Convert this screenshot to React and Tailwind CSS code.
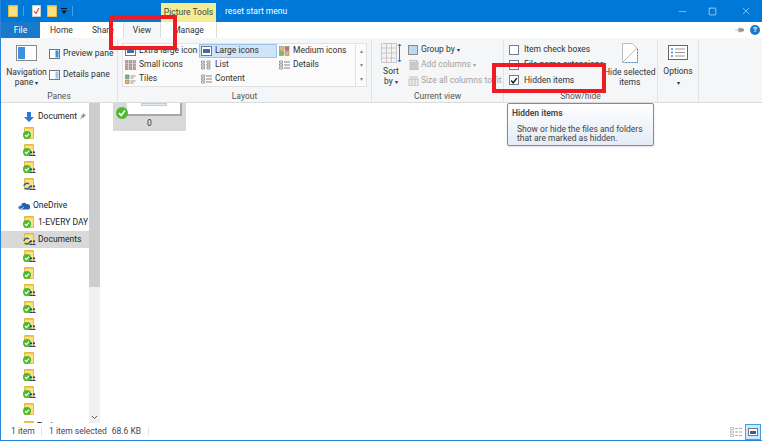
import { Minus, Square, X, ChevronDown } from 'lucide-react';

const FONT = { fontFamily: 'Roboto, "Noto Sans", sans-serif' };

function Folder({ className = 'w-[10px] h-[12px]' }) {
  return (
    <svg viewBox="0 0 10 12" className={className} preserveAspectRatio="none">
      <path d="M0.5 0.5h9v11h-9z" fill="#fde07f" stroke="#e6bb45" />
      <path d="M1 1.500h8" stroke="#f0c755" />
    </svg>
  );
}

function SyncFolder({ kind }) {
  return (
    <span className="relative block w-[12px] h-[13px] shrink-0">
      <span className="absolute right-[1px] top-0"><Folder /></span>
      {kind === 'sync' ? (
        <svg viewBox="0 0 8 8" className="absolute left-0 bottom-[1px] w-[8px] h-[8px]">
          <path d="M1 4a3 3 0 0 1 5-2M7 4a3 3 0 0 1-5 2" fill="none" stroke="#1f62b5" strokeWidth="1.5" />
        </svg>
      ) : (
        <svg viewBox="0 0 8 8" className="absolute left-0 bottom-[1px] w-[8px] h-[8px]">
          <circle cx="4" cy="4" r="4" fill="#4cb92f" />
          <path d="M2 4l1.500 1.600L6 2.600" fill="none" stroke="#fff" strokeWidth="1.200" />
        </svg>
      )}
      {kind !== 'check' && (
        <svg viewBox="0 0 7 5" className="absolute -right-[1px] bottom-[1px] w-[7px] h-[5px]">
          <circle cx="2" cy="1.300" r="1.100" fill="#1d3f86" />
          <circle cx="5" cy="1.300" r="1.100" fill="#1d3f86" />
          <path d="M0 5q2-3 4 0zM3 5q2-3 4 0z" fill="#1d3f86" />
        </svg>
      )}
    </span>
  );
}

function NavRow({ kind, label, selected, pin }) {
  return (
    <div className={`flex items-center h-[17px] pl-[22px] text-[8.5px] text-[#222] ${selected ? 'bg-[#d9d9d9]' : ''}`}>
      {kind === 'down' ? (
        <svg viewBox="0 0 12 12" className="w-[12px] h-[12px] shrink-0">
          <path d="M4 1h4v5h3L6 11 1 6h3z" fill="#2a7ad3" />
        </svg>
      ) : (
        <SyncFolder kind={kind} />
      )}
      {label && <span className="ml-[3px] whitespace-nowrap">{label}</span>}
      {pin && (
        <svg viewBox="0 0 8 8" className="w-[7px] h-[7px] ml-[2px]">
          <path d="M5 0l3 3-2 1-1 2-1-1-3 3 2-4-1-1 2-1z" fill="#999" />
        </svg>
      )}
    </div>
  );
}

function NavPane() {
  const lower = ['people', 'check', 'people', 'people', 'people', 'people', 'check', 'people', 'people', 'check'];
  return (
    <div className="w-[88px] shrink-0 overflow-hidden pt-[5px]">
      <NavRow kind="down" label="Document" pin />
      <NavRow kind="check" />
      <NavRow kind="people" />
      <NavRow kind="people" />
      <NavRow kind="sync" />
      <div className="h-[4px]" />
      <div className="flex items-center h-[17px] pl-[17px] text-[8.5px] text-[#222]">
        <svg viewBox="0 0 14 10" className="w-[12px] h-[10px] shrink-0">
          <path d="M3 9a2.500 2.500 0 0 1 0-5 4 4 0 0 1 7-1 3 3 0 0 1 2 6z" fill="#1f62b5" />
          <path d="M2 6a2 2 0 0 1 3-2M6 6a2 2 0 0 1-3 2" fill="none" stroke="#fff" strokeWidth="1" />
        </svg>
        <span className="ml-[3px]">OneDrive</span>
      </div>
      <NavRow kind="check" label="1-EVERY DAY" />
      <NavRow kind="sync" label="Documents" selected />
      {lower.map((k, i) => <NavRow key={i} kind={k} />)}
      <div className="flex items-center h-[17px] pl-[23px] text-[8.5px] text-[#222]">
        <Folder />
        <span className="ml-[3px]">Tasks</span>
      </div>
    </div>
  );
}

function GalleryItem({ label, selected, icon }) {
  return (
    <div className={`flex items-center h-[14px] pl-[1px] border whitespace-nowrap overflow-hidden ${selected ? 'bg-[#cfe4f8] border-[#98c6ef]' : 'border-transparent'}`}>
      <svg viewBox="0 0 11 10" className="w-[11px] h-[10px] shrink-0">
        {icon === 'large' && <><rect x="0.5" y="0.5" width="10" height="9" fill="#fff" stroke="#777" /><rect x="2" y="3" width="7" height="4" fill="#3b6ea8" /></>}
        {icon === 'grid' && <g fill="#d8a0a0" stroke="#888" strokeWidth="0.6"><rect x="0.5" y="0.5" width="2.500" height="2.500" /><rect x="4.200" y="0.5" width="2.500" height="2.500" /><rect x="8" y="0.5" width="2.500" height="2.500" /><rect x="0.5" y="4" width="2.500" height="2.500" /><rect x="4.200" y="4" width="2.500" height="2.500" /><rect x="8" y="4" width="2.500" height="2.500" /><rect x="0.5" y="7.500" width="2.500" height="2.500" /><rect x="4.200" y="7.500" width="2.500" height="2.500" /><rect x="8" y="7.500" width="2.500" height="2.500" /></g>}
        {icon === 'medium' && <g stroke="#888" strokeWidth="0.6"><rect x="0.5" y="0.5" width="4" height="4" fill="#e8b860" /><rect x="6" y="0.5" width="4" height="4" fill="#d46a5a" /><rect x="0.5" y="5.500" width="4" height="4" fill="#7fb86a" /><rect x="6" y="5.500" width="4" height="4" fill="#e8b860" /></g>}
        {icon === 'list' && <g fill="none" stroke="#777"><path d="M0.5 1h3v2h-3zM0.5 4h3v2h-3zM0.5 7h3v2h-3zM6 1h3v2H6zM6 4h3v2H6zM6 7h3v2H6z" strokeWidth="0.7" /></g>}
        {icon === 'lines' && <g stroke="#777"><path d="M0.5 1h3v2h-3zM0.5 4h3v2h-3zM0.5 7h3v2h-3z" fill="none" strokeWidth="0.7" /><path d="M5 2h6M5 5h6M5 8h6" strokeWidth="0.9" /></g>}
        {icon === 'tiles' && <g><rect x="0.5" y="1" width="3.500" height="3.500" fill="#7fb86a" stroke="#777" strokeWidth="0.6" /><rect x="0.5" y="6" width="3.500" height="3.500" fill="#e8b860" stroke="#777" strokeWidth="0.6" /><path d="M5.500 2h5M5.500 4h3M5.500 7h5M5.500 9h3" stroke="#777" strokeWidth="0.8" /></g>}
      </svg>
      <span className="ml-[3px]">{label}</span>
    </div>
  );
}

function RibbonGroup({ width, label, children }) {
  return (
    <div className="flex flex-col shrink-0 border-r border-[#e2e3e4] h-full" style={{ width }}>
      <div className="flex-1 min-h-0 relative flex">{children}</div>
      <div className="h-[14px] pt-[2px] text-center text-[8.5px] leading-[12px] text-[#555]">{label}</div>
    </div>
  );
}

function Check({ label, checked, className = '' }) {
  return (
    <div className={`flex items-center h-[16px] whitespace-nowrap ${className}`}>
      <span className="flex items-center justify-center w-[10px] h-[10px] border border-[#6f7f93] bg-white mr-[5px] shrink-0">
        {checked && (
          <svg viewBox="0 0 10 10" className="w-[9px] h-[9px]">
            <path d="M1.500 5l2.500 3L8.500 2" fill="none" stroke="#111" strokeWidth="1.800" />
          </svg>
        )}
      </span>
      {label}
    </div>
  );
}

function Ribbon() {
  return (
    <div className="flex h-[65px] shrink-0 bg-[#f5f6f7] border-b border-[#dadbdc] pt-[2px] text-[8.5px] leading-[9.5px] text-[#333]">
      <RibbonGroup width={117} label="Panes">
        <div className="w-[48px] flex flex-col items-center pt-[5px] shrink-0 pl-[3px]">
          <svg viewBox="0 0 21 16" className="w-[21px] h-[16px]">
            <rect x="0.5" y="0.5" width="20" height="15" fill="#fff" stroke="#8a8a8a" />
            <rect x="2" y="2" width="7" height="12" fill="#3f8fdd" />
          </svg>
          <div className="text-center mt-[7px] whitespace-nowrap">Navigation<br />pane <span className="text-[6px]">▾</span></div>
        </div>
        <div className="flex flex-col pt-[7px] gap-[8px] whitespace-nowrap">
          <div className="flex items-center h-[13px]">
            <svg viewBox="0 0 11 10" className="w-[11px] h-[10px] mr-[3px]"><rect x="0.5" y="0.5" width="10" height="9" fill="#fff" stroke="#777" /><rect x="6.500" y="1.500" width="3" height="7" fill="#3f8fdd" /></svg>
            Preview pane
          </div>
          <div className="flex items-center h-[13px]">
            <svg viewBox="0 0 11 10" className="w-[11px] h-[10px] mr-[3px]"><rect x="0.5" y="0.5" width="10" height="9" fill="#fff" stroke="#777" /><rect x="6.500" y="1.500" width="3" height="7" fill="#9cc4ea" /></svg>
            Details pane
          </div>
        </div>
      </RibbonGroup>

      <RibbonGroup width={254} label="Layout">
        <div className="flex ml-[4px] mt-[3px] h-[44px] w-[245px] border border-[#e1e2e3] bg-[#fbfbfb]">
          <div className="grid grid-cols-[76px_78px_78px] flex-1 overflow-hidden">
            <GalleryItem icon="large" label="Extra large icons" />
            <GalleryItem icon="large" label="Large icons" selected />
            <GalleryItem icon="medium" label="Medium icons" />
            <GalleryItem icon="grid" label="Small icons" />
            <GalleryItem icon="list" label="List" />
            <GalleryItem icon="lines" label="Details" />
            <GalleryItem icon="tiles" label="Tiles" />
            <GalleryItem icon="lines" label="Content" />
          </div>
          <div className="w-[11px] shrink-0 border-l border-[#e1e2e3] flex flex-col items-center text-[6px] leading-[14px] text-[#888]">
            <span>▴</span>
            <span>▾</span>
            <span>▾</span>
          </div>
        </div>
      </RibbonGroup>

      <RibbonGroup width={132} label="Current view">
        <div className="w-[36px] flex flex-col items-center pt-[3px] pl-[2px] shrink-0">
          <svg viewBox="0 0 21 20" className="w-[21px] h-[20px]">
            <path d="M0.5 0.5h15v19h-15zM0.5 5h15M0.5 10h15M0.5 15h15M5.500 0.5v19M10.500 0.5v19" fill="#f3f3f3" stroke="#bdbdbd" strokeWidth="0.8" />
            <path d="M18.500 1v18M17 3l1.500-2 1.500 2M17 17l1.500 2 1.500-2" fill="none" stroke="#2a7ad3" strokeWidth="1" />
          </svg>
          <div className="text-center mt-[4px]">Sort<br />by <span className="text-[6px]">▾</span></div>
        </div>
        <div className="flex flex-col pt-[3px] gap-[2px] whitespace-nowrap">
          <div className="flex items-center h-[13px]">
            <span className="w-[10px] h-[10px] bg-[#b9d8f5] border border-[#8a8a8a] mr-[3px]" />
            Group by <span className="text-[6px] ml-[2px]">▾</span>
          </div>
          <div className="flex items-center h-[13px] text-[#a3a3a3]">
            <svg viewBox="0 0 11 10" className="w-[11px] h-[10px] mr-[2px]"><path d="M1 0.5h9M2 2h2v8H2zM5 2h2v8H5zM8 2h2v8H8z" fill="#dcdcdc" stroke="#aaa" strokeWidth="0.7" /></svg>
            Add columns <span className="text-[6px] ml-[2px]">▾</span>
          </div>
          <div className="flex items-center h-[15px] text-[#a3a3a3]">
            <svg viewBox="0 0 11 10" className="w-[11px] h-[10px] mr-[2px]"><path d="M1 3h9v7H1zM4 3v7M7 3v7M1 1h9" fill="#eee" stroke="#aaa" strokeWidth="0.7" /></svg>
            Size all columns to fit
          </div>
        </div>
      </RibbonGroup>

      <RibbonGroup width={154} label="Show/hide">
        <div className="flex flex-col pl-[5px] w-[100px] pt-[2px]">
          <Check label="Item check boxes" />
          <Check label="File name extensions" />
          <Check label="Hidden items" checked />
        </div>
        <div className="flex flex-col items-center pt-[3px] whitespace-nowrap">
          <svg viewBox="0 0 16 20" className="w-[16px] h-[20px]">
            <path d="M0.5 0.5h10l5 5v14h-15z" fill="#fff" stroke="#bbb" />
            <path d="M1 19L15 5" stroke="#bbb" />
            <path d="M15.500 6v13.500H2" fill="none" stroke="#3f8fdd" strokeDasharray="1.500 1.500" />
          </svg>
          <div className="text-center mt-[5px]">Hide selected<br />items</div>
        </div>
      </RibbonGroup>

      <RibbonGroup width={41} label="">
        <div className="flex flex-col items-center w-full pt-[5px]">
          <svg viewBox="0 0 20 15" className="w-[20px] h-[15px]">
            <rect x="0.5" y="0.5" width="19" height="14" fill="#fff" stroke="#666" />
            <path d="M3 4h2M3 7.500h2M3 11h2" stroke="#3f8fdd" strokeWidth="1.600" />
            <path d="M7 4h10M7 7.500h10M7 11h10" stroke="#999" />
          </svg>
          <div className="mt-[7px]">Options</div>
          <span className="text-[6px] mt-[1px]">▾</span>
        </div>
      </RibbonGroup>
    </div>
  );
}

export default function App() {
  return (
    <div className="relative w-[762px] h-[441px] overflow-hidden bg-white flex flex-col border-l border-b border-[#2a86d8]" style={FONT}>
      {/* title bar */}
      <div className="flex items-center h-[22px] shrink-0 bg-[#0078d7] text-white text-[8.5px] pl-[7px]">
        <Folder className="w-[10px] h-[12px]" />
        <span className="w-px h-[10px] bg-[#4a9fe4] ml-[5px] mr-[8px]" />
        <svg viewBox="0 0 9 12" className="w-[9px] h-[12px]">
          <path d="M0.5 0.5h8v11h-8z" fill="#fff" stroke="#ccc" />
          <path d="M2 6l2 2.500L7 3" fill="none" stroke="#d9482b" strokeWidth="1.200" />
        </svg>
        <span className="ml-[6px]"><Folder className="w-[10px] h-[12px]" /></span>
        <svg viewBox="0 0 6 6" className="w-[6px] h-[6px] ml-[4px]">
          <path d="M0 0h6v1H0zM0 2.500h6L3 6z" fill="#111" />
        </svg>
        <span className="w-px h-[10px] bg-[#4a9fe4] ml-[5px]" />
        <div className="ml-[88px] w-[55px] h-[19px] self-end bg-[#f3ee93] text-[#444] text-center leading-[19px] whitespace-nowrap">Picture Tools</div>
        <span className="ml-[9px] whitespace-nowrap">reset start menu</span>
        <div className="ml-auto flex items-center h-full text-white">
          <Minus className="w-[11px] h-[11px] mr-[20px]" strokeWidth={1} />
          <Square className="w-[9px] h-[9px] mr-[23px]" strokeWidth={1.5} />
          <X className="w-[12px] h-[12px] mr-[10px]" strokeWidth={1} />
        </div>
      </div>

      {/* tabs */}
      <div className="flex items-stretch h-[16px] shrink-0 text-[8.5px] leading-[16px] text-[#333]">
        <div className="w-[39px] bg-[#1979ca] text-white text-center">File</div>
        <div className="ml-[10px] w-[42px]">Home</div>
        <div className="w-[31px] overflow-hidden">Share</div>
        <div className="w-[38px] text-center bg-[#f5f6f7] border-x border-[#dadbdc]">View</div>
        <div className="w-[56px] text-center border-r border-[#dadbdc]">Manage</div>
        <div className="ml-auto flex items-center pr-[2px]">
          <svg viewBox="0 0 10 6" className="w-[9px] h-[6px] mr-[6px]"><path d="M0 3h4M4 1h4v4H4zM8 2h2v2H8z" fill="#999" stroke="#999" strokeWidth="0.6" /></svg>
          <span className="w-[10px] h-[10px] rounded-full bg-[#1979ca] text-white text-[8px] leading-[10px] text-center font-bold">?</span>
        </div>
      </div>

      <Ribbon />

      {/* body */}
      <div className="flex flex-1 min-h-0">
        <NavPane />
        <div className="w-[11px] shrink-0 bg-[#f0f0f0] flex flex-col justify-between items-center">
          <div className="w-full h-[184px] bg-[#cdcdcd]" />
          <ChevronDown className="w-[9px] h-[9px] text-[#444] mb-[1px]" strokeWidth={2.5} />
        </div>
        <div className="flex-1 pl-[13px]">
          <div className="relative w-[73px] h-[28px] bg-[#d9d9d9] flex flex-col items-center justify-end text-[8.5px] leading-[13px] text-[#333] pb-[1px]">
            <div className="absolute left-[14px] top-0 w-[55px] h-[13px] bg-white border-r-2 border-b-2 border-[#a8a8a8]">
              <div className="mx-auto w-[26px] h-[3px] bg-[#e4e8ef] border border-[#ccc]" />
            </div>
            <svg viewBox="0 0 12 12" className="absolute left-[3px] top-[4px] w-[12px] h-[12px]">
              <circle cx="6" cy="6" r="6" fill="#4cb92f" />
              <path d="M3 6l2.200 2.400L9 3.600" fill="none" stroke="#fff" strokeWidth="1.600" />
            </svg>
            <span>0</span>
          </div>
        </div>
      </div>

      {/* status bar */}
      <div className="relative flex items-center h-[17px] shrink-0 bg-white text-[8.5px] text-[#445] pl-[10px]">
        <span className="w-[30px]">1 item</span>
        <span className="w-px h-[9px] bg-[#e5e5e5] mr-[7px]" />
        <span>1 item selected</span>
        <span className="ml-[5px]">68.6 KB</span>
        <span className="w-px h-[9px] bg-[#e5e5e5] ml-[7px]" />
        <div className="ml-auto flex items-center pr-[1px]">
          <svg viewBox="0 0 12 10" className="w-[12px] h-[10px] mr-[3px]">
            <path d="M0.5 0.5h3v2h-3zM0.5 4h3v2h-3zM0.5 7.500h3v2h-3z" fill="none" stroke="#aaa" strokeWidth="0.7" />
            <path d="M5 1.500h3M9 1.500h3M5 5h3M9 5h3M5 8.500h3M9 8.500h3" stroke="#aaa" />
          </svg>
          <span className="flex items-center justify-center w-[16px] h-[16px] bg-[#cce8ff] border border-[#3aa0e8]">
            <svg viewBox="0 0 10 8" className="w-[10px] h-[8px]">
              <rect x="0.5" y="0.5" width="9" height="7" fill="#fff" stroke="#777" />
              <rect x="2" y="3" width="6" height="3" fill="#2f5f96" />
            </svg>
          </span>
        </div>
      </div>

      {/* tooltip */}
      <div className="absolute left-[506px] top-[103px] w-[147px] h-[43px] rounded-[2px] border border-[#8a8a8a] bg-gradient-to-b from-white to-[#e3ebf6] shadow-sm text-[8.5px] leading-[9px] text-[#444] pl-[4px] pt-[5px]">
        <div className="font-semibold">Hidden items</div>
        <div className="pl-[5px] mt-[7px] whitespace-nowrap">Show or hide the files and folders<br />that are marked as hidden.</div>
      </div>

      {/* red annotations */}
      <div className="absolute left-[108px] top-[15px] w-[68px] h-[35px] border-[4px] border-[#ed1c24]" />
      <div className="absolute left-[491px] top-[63px] w-[114px] h-[30px] border-[4px] border-[#ed1c24]" />
    </div>
  );
}
